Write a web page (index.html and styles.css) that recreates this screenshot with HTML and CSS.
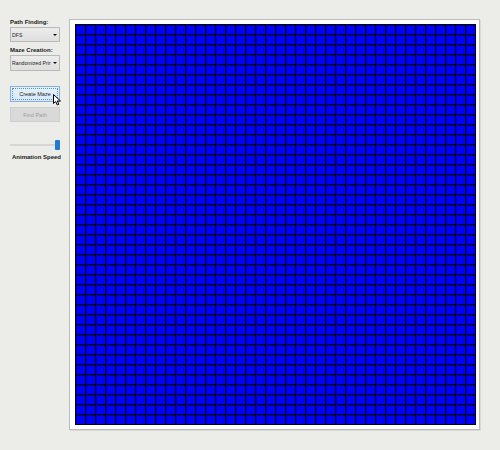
FILE: index.html
```html
<!DOCTYPE html>
<html>
<head>
<meta charset="utf-8">
<link rel="stylesheet" href="styles.css">
</head>
<body>
<div class="app">
  <aside class="sidebar">
    <div class="label l1">Path Finding:</div>
    <div class="select s1"><span>DFS</span><i class="arrow"></i></div>
    <div class="label l2">Maze Creation:</div>
    <div class="select s2"><span>Randomized Prir</span><i class="arrow"></i></div>
    <div class="btn primary"><span class="focus">Create Maze</span>
      <svg class="cursor" width="9" height="12" viewBox="0 0 9 12"><path d="M0.5 0.5 L0.5 9.5 L2.7 7.5 L4.3 11 L5.8 10.3 L4.3 7 L7.5 7 Z" fill="#fff" stroke="#000" stroke-width="1" stroke-linejoin="round"/></svg>
    </div>
    <div class="btn disabled">Find Path</div>
    <div class="slider"><div class="track"></div><div class="thumb"></div></div>
    <div class="label l3">Animation Speed</div>
  </aside>
  <main class="frame">
    <div class="grid"></div>
  </main>
</div>
</body>
</html>
```
FILE: styles.css
```css
html, body {
  margin: 0;
  padding: 0;
  background: #ecece9;
  width: 500px;
  height: 450px;
  overflow: hidden;
  font-family: "Liberation Sans", Arial, sans-serif;
}
.app {
  display: flex;
  align-items: flex-start;
}
.sidebar {
  width: 50px;
  margin-left: 10px;
  padding-top: 18px;
  display: flex;
  flex-direction: column;
}
.label {
  font-size: 6px;
  font-weight: bold;
  line-height: 8px;
  height: 8px;
  color: #1a1a1a;
  white-space: nowrap;
}
.l3 {
  margin-top: 3px;
  padding-left: 2px;
}
.select {
  box-sizing: border-box;
  height: 15px;
  border: 1px solid #b9b9b9;
  background: linear-gradient(#ececec, #dfdfdf);
  display: flex;
  align-items: center;
  padding: 0 2px 0 1px;
  font-size: 5.2px;
  color: #222;
  position: relative;
  white-space: nowrap;
  overflow: hidden;
}
.select span { flex: 1; overflow: hidden; }
.s1 { margin-top: 1px; }
.s2 { margin-top: 1px; height: 16px; }
.l2 { margin-top: 4px; }
.arrow {
  flex: none;
  width: 0;
  height: 0;
  border-left: 2px solid transparent;
  border-right: 2px solid transparent;
  border-top: 2.5px solid #111;
  margin-left: 2px;
}
.btn {
  box-sizing: border-box;
  height: 16px;
  display: flex;
  align-items: center;
  justify-content: center;
  font-size: 5.5px;
  color: #222;
  position: relative;
}
.primary {
  margin-top: 15px;
  border: 1px solid #7fb2e5;
  background: linear-gradient(#e6f1fb, #d6e8f8);
  padding: 1px;
}
.primary .focus {
  box-sizing: border-box;
  width: 100%;
  height: 100%;
  border: 1px dotted #6a8fb5;
  display: flex;
  align-items: center;
  justify-content: center;
}
.disabled {
  margin-top: 5px;
  height: 15px;
  border: 1px solid #cfcfcf;
  background: #d9d9d9;
  color: #9c9c9c;
}
.cursor {
  position: absolute;
  left: 42px;
  top: 7px;
}
.slider {
  margin-top: 18px;
  height: 10px;
  position: relative;
}
.track {
  position: absolute;
  left: 0;
  right: 4px;
  top: 4px;
  height: 2px;
  background: #d6d6d4;
}
.thumb {
  position: absolute;
  right: 0;
  top: 0;
  width: 5px;
  height: 10px;
  background: #1f7ad2;
  border-radius: 1px;
}
.frame {
  margin-left: 9px;
  margin-top: 19px;
  border: 1px solid #bcbcbc;
  box-shadow: 1px 1px 0 #d9d9d7;
  background: #fff;
  padding: 4px 3px 4px 5px;
}
.grid {
  width: 401px;
  height: 401px;
  background-color: #0000ff;
  background-image:
    linear-gradient(to right, #000 0, #000 1px, #0000a8 1px, #0000a8 2px, transparent 2px),
    linear-gradient(to bottom, #000 0, #000 1px, #0000a8 1px, #0000a8 2px, transparent 2px);
  background-size: 10px 10px;
}
```
